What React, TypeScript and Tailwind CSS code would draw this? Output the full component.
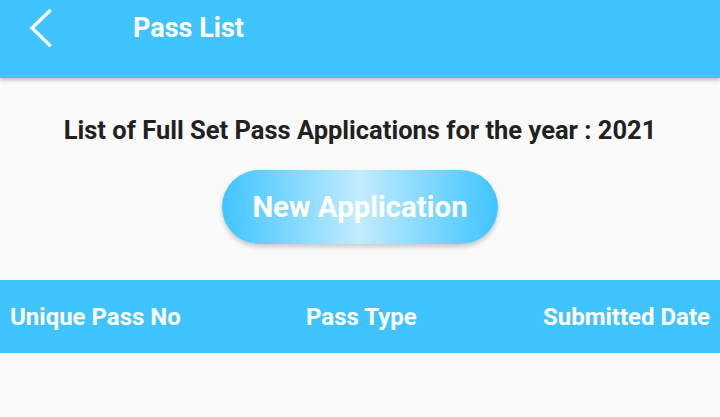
import React from "react";

export default function App() {
  return (
    <div className="w-[720px] h-[417px] bg-[#fafafa] overflow-hidden flex flex-col" style={{ fontFamily: "Roboto, 'Liberation Sans', sans-serif" }}>
      <div className="h-[78px] shrink-0 bg-[#40c4ff] flex items-start shadow-[0_2px_4px_rgba(0,0,0,0.25)] relative z-10">
        <div className="w-[133px] h-[56px] flex items-center pl-[27px]">
          <svg width="26" height="38" viewBox="0 0 26 38" fill="none">
            <path d="M22.5 2 L5 19 L22.5 36" stroke="white" strokeWidth="3.3" strokeLinecap="square" />
          </svg>
        </div>
        <div className="h-[56px] flex items-center text-white text-[27px] font-bold">Pass List</div>
      </div>
      <div className="flex flex-col items-center">
        <div className="mt-[36px] text-[25.5px] font-bold text-[#212121] leading-[32px] whitespace-nowrap">
          List of Full Set Pass Applications for the year : 2021
        </div>
        <div className="mt-[24px] w-[276px] h-[74px] rounded-full flex items-center justify-center text-white text-[29.4px] font-bold shadow-[0_3px_5px_rgba(0,0,0,0.2)] bg-[linear-gradient(90deg,#40c4ff_0%,#80d8ff_25%,#c2ecff_50%,#80d8ff_75%,#40c4ff_100%)]">
          New Application
        </div>
      </div>
      <div className="mt-[36px] h-[73px] shrink-0 bg-[#40c4ff] flex items-center text-white text-[24px] font-bold whitespace-nowrap">
        <div className="pl-[10px] w-[306px]">Unique Pass No</div>
        <div className="flex-1">Pass Type</div>
        <div className="pr-[10px]">Submitted Date</div>
      </div>
    </div>
  );
}
